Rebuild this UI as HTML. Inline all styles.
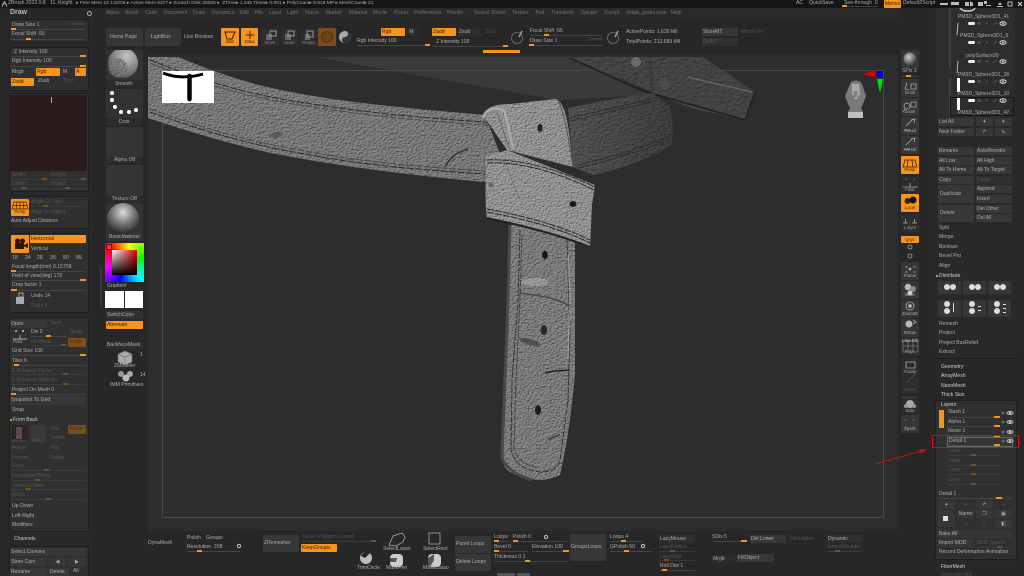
<!DOCTYPE html>
<html><head><meta charset="utf-8"><title>ZBrush</title>
<style>
html,body{margin:0;padding:0;background:#272727;}
#r{position:relative;width:1024px;height:576px;overflow:hidden;background:#272727;font-family:"Liberation Sans",sans-serif;filter:blur(.35px);}
#r i,#r b,#r em,#r u,#r p,#r svg.a{position:absolute;display:block;margin:0;}
i{font-style:normal;white-space:nowrap;font-size:5.1px;line-height:7px;color:#adadad;}
i.d{color:#565656;}
i.w{font-weight:bold;color:#d0d0d0;}
i.m{color:#737373;}
b{background:#f7941d;height:2px;width:5px;}
em{background:#444;height:1px;}
u{text-decoration:none;background:#373737;height:8px;line-height:8px;font-size:5.1px;color:#adadad;padding-left:1px;box-sizing:border-box;white-space:nowrap;border-radius:1px;}
u.o{background:#f7941d;color:#402000;}
u.x{background:#7a4d1e;color:#3a2a18;}
u.n{color:#565656;background:#303030;}
u.c{text-align:center;padding:0;}
p{background:#303030;border:1px solid #1e1e1e;border-radius:3px;box-sizing:border-box;}
</style></head><body><div id="r">

<!-- bars -->
<em style="left:0;top:0;width:1024px;height:8px;background:#151515"></em>
<em style="left:104px;top:8px;width:795px;height:10px;background:#2a2a2a"></em>
<em style="left:148px;top:54px;width:750px;height:477px;background:#2d2d2d"></em>
<em style="left:0;top:18px;width:92px;height:558px;background:#292929"></em>
<em style="left:935px;top:8px;width:82px;height:568px;background:#292929"></em>

<!-- Title bar -->
<svg class="a" style="left:1px;top:0" width="7" height="8"><path d="M3.5 1L1 7M3.5 1L6 7M1 4H6" stroke="#bbb" stroke-width=".8" fill="none"/></svg>
<i style="left:8px;top:0">ZBrush 2022.0.8</i>
<i style="left:50px;top:0">11. Knight</i>
<i style="left:76px;top:0;font-size:4.9px">▸ Free Mem 22.132GB ▸ Active Mem 6377 ▸ Scratch Disk 30026 ▸&nbsp; ZTime▸ 1.245 Timer▸ 0.001 ▸ PolyCount▸ 8.516 MP ▸ MeshCount▸ 21</i>
<i style="left:796px;top:0">AC</i><i style="left:809px;top:0">QuickSave</i>
<i style="left:844px;top:0">See-through&nbsp; 0</i>
<em style="left:842px;top:6px;width:36px;background:#444"></em><b style="left:842px;top:5px"></b>
<u class="o" style="left:884px;top:0;width:17px;text-align:center;padding:0">Menus</u>
<i style="left:903px;top:0">DefaultZScript</i>
<svg class="a" style="left:938px;top:0" width="86" height="8" fill="#bbb"><rect x="2" y="3" width="8" height="2"/><rect x="13" y="2" width="8" height="3"/><path d="M27 2h4v4h-4zM32 1l3 2v3h-3zM40 2h5v4h-5zM46 1h3v3h-3z"/><rect x="48" y="5" width="5" height="1" /><path d="M58 2l2 3h-4z" transform="translate(4 0)"/><rect x="59" y="6" width="6" height="1"/><rect x="70" y="2" width="4" height="4" fill="none" stroke="#bbb"/><path d="M80 2l4 4M84 2l-4 4" stroke="#ddd" stroke-width="1"/></svg>

<!-- Draw + menu -->
<i class="w" style="left:10px;top:9px;font-size:7px;color:#bbb">Draw</i>
<svg class="a" style="left:86px;top:10px" width="7" height="7"><circle cx="3.5" cy="3.5" r="2" stroke="#aaa" fill="none"/></svg>
<i class="m" style="left:106px;top:10px">Alpha</i><i class="m" style="left:125px;top:10px">Brush</i><i class="m" style="left:145px;top:10px">Color</i><i class="m" style="left:164px;top:10px">Document</i><i class="m" style="left:193px;top:10px">Draw</i><i class="m" style="left:212px;top:10px">Dynamics</i><i class="m" style="left:240px;top:10px">Edit</i><i class="m" style="left:255px;top:10px">File</i><i class="m" style="left:269px;top:10px">Layer</i><i class="m" style="left:287px;top:10px">Light</i><i class="m" style="left:305px;top:10px">Macro</i><i class="m" style="left:326px;top:10px">Marker</i><i class="m" style="left:349px;top:10px">Material</i><i class="m" style="left:373px;top:10px">Movie</i><i class="m" style="left:394px;top:10px">Picker</i><i class="m" style="left:414px;top:10px">Preferences</i><i class="m" style="left:447px;top:10px">Render</i><i class="m" style="left:474px;top:10px">Stencil</i><i class="m" style="left:491px;top:10px">Stroke</i><i class="m" style="left:512px;top:10px">Texture</i><i class="m" style="left:535px;top:10px">Tool</i><i class="m" style="left:551px;top:10px">Transform</i><i class="m" style="left:581px;top:10px">Zplugin</i><i class="m" style="left:604px;top:10px">Zscript</i><i class="m" style="left:626px;top:10px">m4gik_podrezane</i><i class="m" style="left:671px;top:10px">Help</i>

<!-- Top strip -->
<u style="left:106px;top:28px;width:37px;height:18px;line-height:18px;padding-left:4px;background:#363636">Home Page</u>
<u style="left:145px;top:28px;width:36px;height:18px;line-height:18px;padding-left:6px;background:#363636">LightBox</u>
<i style="left:184px;top:34px">Live Boolean</i>
<u class="o c" style="left:221px;top:28px;width:18px;height:18px;line-height:28px;font-size:4.2px">Edit</u>
<u class="o c" style="left:241px;top:28px;width:17px;height:18px;line-height:28px;font-size:4.2px">Draw</u>
<svg class="a" style="left:221px;top:28px" width="38" height="14" fill="none" stroke="#402000"><path d="M4 4h10l-3 7H6z"/><path d="M29 3v8M25 7h8" stroke-width="1"/></svg>
<u class="c" style="left:261px;top:28px;width:18px;height:18px;background:#2d2d2d;line-height:30px;font-size:4.2px;color:#888">Move</u>
<u class="c" style="left:281px;top:28px;width:17px;height:18px;background:#2d2d2d;line-height:30px;font-size:4.2px;color:#888">Scale</u>
<u class="c" style="left:300px;top:28px;width:17px;height:18px;background:#2d2d2d;line-height:30px;font-size:4.2px;color:#888">Rotate</u>
<svg class="a" style="left:261px;top:28px" width="58" height="14"><g fill="#aaa"><rect x="5" y="6" width="6" height="6" fill="#666"/><rect x="9" y="3" width="6" height="5" fill="none" stroke="#999"/><rect x="24" y="6" width="6" height="6" fill="#666"/><rect x="27" y="3" width="6" height="5" fill="none" stroke="#999"/><rect x="44" y="6" width="5" height="6" fill="#666"/><rect x="46" y="3" width="6" height="6" fill="none" stroke="#999"/></g></svg>
<u class="x" style="left:318px;top:28px;width:18px;height:18px"></u>
<svg class="a" style="left:318px;top:28px" width="36" height="18"><circle cx="9" cy="9" r="5.5" fill="#6e4419" stroke="#54330f"/><circle cx="27" cy="9" r="6" fill="#aaa"/><path d="M27 3a3 3 0 0 1 0 6a3 3 0 0 0 0 6a6 6 0 0 0 0-12" fill="#333"/></svg>
<u class="o" style="left:381px;top:28px;width:24px">Rgb</u><u style="left:407px;top:28px;width:11px;background:#2d2d2d">&nbsp;M</u>
<i style="left:357px;top:38px">Rgb Intensity 100</i><em style="left:357px;top:45px;width:73px"></em><b style="left:425px;top:44px"></b>
<u class="o" style="left:432px;top:28px;width:24px">Zadd</u><u style="left:458px;top:28px;width:24px;background:#2d2d2d">Zsub</u><i class="d" style="left:485px;top:29px">Zcut</i>
<i style="left:436px;top:39px">Z Intensity 100</i><em style="left:432px;top:46px;width:76px"></em><b style="left:503px;top:45px"></b>
<svg class="a" style="left:510px;top:30px" width="110" height="18" fill="none" stroke="#666"><circle cx="7" cy="8" r="5.5"/><circle cx="103" cy="8" r="5.5"/><path d="M9 7l3-6M105 7l3-6" stroke="#bbb" stroke-width="1.2"/></svg>
<i style="left:530px;top:28px">Focal Shift -55</i><em style="left:530px;top:35px;width:72px"></em><b style="left:544px;top:34px"></b>
<i style="left:530px;top:38px">Draw Size 1</i><i class="d" style="left:588px;top:36px;font-size:3.8px">Dynamic</i><em style="left:529px;top:45px;width:74px"></em><b style="left:529px;top:44px"></b>
<i style="left:626px;top:29px">ActivePoints: 1.630 Mil</i><i style="left:626px;top:39px">TotalPoints: 213.689 Mil</i>
<u style="left:702px;top:28px;width:36px">StoreMT</u><i class="d" style="left:741px;top:29px">Morph UV</i><u class="n" style="left:702px;top:38px;width:36px">DelMT</u>
<em style="left:483px;top:50px;width:37px;height:3px;background:#f7941d"></em>

<!-- Left panels -->
<p style="left:9px;top:19px;width:80px;height:24px"></p>
<i style="left:12px;top:22px">Draw Size 1</i><i class="d" style="left:71px;top:21px;font-size:3.8px">Dynamic</i><em style="left:11px;top:29px;width:74px"></em><b style="left:11px;top:28px"></b>
<i style="left:12px;top:31px">Focal Shift -55</i><em style="left:11px;top:39px;width:74px"></em><b style="left:26px;top:38px"></b>
<p style="left:9px;top:47px;width:80px;height:44px"></p>
<i style="left:14px;top:49px">Z Intensity 100</i><em style="left:11px;top:56px;width:75px"></em><b style="left:80px;top:55px;width:6px"></b>
<i style="left:12px;top:58px">Rgb Intensity 100</i><em style="left:11px;top:66px;width:75px"></em><b style="left:80px;top:65px;width:6px"></b>
<i style="left:12px;top:69px">Mrgb</i><u class="o" style="left:36px;top:68px;width:24px">Rgb</u><i style="left:63px;top:69px">M</i><u class="o" style="left:75px;top:68px;width:11px">A</u>
<u class="o" style="left:11px;top:78px;width:23px">Zadd</u><i style="left:38px;top:78px">Zsub</i><i class="d" style="left:63px;top:78px">Zcut</i>
<p style="left:9px;top:93px;width:80px;height:99px"></p>
<em style="left:10px;top:95px;width:77px;height:76px;background:#2a1c1c"></em>
<em style="left:51px;top:97px;width:1px;height:6px;background:#aaa"></em>
<i class="d" style="left:12px;top:172px">Width</i><i class="d" style="left:51px;top:172px">Height</i><em style="left:12px;top:179px;width:35px;background:#3b3b3b"></em><em style="left:51px;top:179px;width:35px;background:#3b3b3b"></em><b style="left:42px;top:178px;background:#7a4d1e"></b><b style="left:81px;top:178px;background:#7a4d1e"></b>
<i class="d" style="left:12px;top:181px">Depth</i><i class="d" style="left:51px;top:181px">Imbed</i><em style="left:12px;top:188px;width:35px;background:#3b3b3b"></em><em style="left:51px;top:188px;width:35px;background:#3b3b3b"></em><b style="left:21px;top:187px;background:#7a4d1e"></b><b style="left:65px;top:187px;background:#7a4d1e"></b>
<p style="left:9px;top:196px;width:80px;height:33px"></p>
<u class="o c" style="left:11px;top:199px;width:18px;height:17px;line-height:26px;font-size:4.2px">Persp</u>
<svg class="a" style="left:11px;top:199px" width="18" height="12" fill="none" stroke="#402000" stroke-width=".7"><path d="M3 3h12l2 7H1zM6 3l-1 7M9 3v7M12 3l1 7M2 6.500h14"/></svg>
<i class="d" style="left:31px;top:199px">Angle Of View</i><em style="left:31px;top:206px;width:53px;background:#3b3b3b"></em><b style="left:43px;top:205px;background:#7a4d1e"></b>
<i class="d" style="left:31px;top:209px">Align To Object</i>
<u style="left:10px;top:217px;width:76px;height:9px;line-height:9px;background:#2e2e2e">Auto Adjust Distance</u>
<p style="left:9px;top:233px;width:80px;height:80px"></p>
<u class="o" style="left:11px;top:235px;width:18px;height:18px"></u>
<svg class="a" style="left:11px;top:235px" width="18" height="18" fill="#2a1500"><circle cx="6.500" cy="6" r="2.500"/><circle cx="11.500" cy="6" r="2.500"/><rect x="4" y="8" width="9" height="6"/><path d="M13 10l4-2v5l-4-1.500z"/></svg>
<u class="o" style="left:30px;top:235px;width:56px">Horizontal</u>
<u style="left:30px;top:245px;width:56px;background:#2e2e2e">Vertical</u>
<i style="left:12px;top:255px">18</i><i style="left:25px;top:255px">24</i><i style="left:37px;top:255px">28</i><i style="left:50px;top:255px">35</i><i style="left:63px;top:255px">50</i><i style="left:76px;top:255px">85</i>
<i style="left:12px;top:264px">Focal length(mm) 0.15708</i><em style="left:11px;top:271px;width:75px"></em><b style="left:11px;top:270px"></b>
<i style="left:12px;top:273px">Field of view(deg) 179</i><em style="left:11px;top:280px;width:75px"></em><b style="left:80px;top:279px;width:6px"></b>
<i style="left:12px;top:282px">Crop factor 1</i><em style="left:11px;top:290px;width:75px"></em><b style="left:11px;top:289px;width:6px"></b>
<svg class="a" style="left:12px;top:292px" width="16" height="16" fill="#aaa"><rect x="4" y="5" width="8" height="7"/><rect x="7" y="1" width="4" height="4" fill="none" stroke="#aaa"/></svg>
<u style="left:30px;top:292px;width:56px;background:#2e2e2e">Undo 14</u><u class="n" style="left:30px;top:302px;width:56px;background:#2e2e2e">Redo 0</u>

<p style="left:9px;top:317px;width:80px;height:215px"></p>
<u style="left:10px;top:320px;width:37px">Open</u><i class="d" style="left:50px;top:320px">Save</i>
<svg class="a" style="left:12px;top:328px" width="16" height="16" fill="none" stroke="#aaa"><path d="M1 11h14"/><path d="M8 7v4"/><circle cx="4" cy="3" r=".6"/><circle cx="11" cy="3" r=".6"/></svg>
<i style="left:13px;top:338px;font-size:4.2px">Floor</i>
<i style="left:31px;top:329px">Div 0</i><em style="left:31px;top:336px;width:35px"></em><b style="left:46px;top:335px"></b><i class="d" style="left:70px;top:329px">Snap</i>
<i class="d" style="left:31px;top:339px">Fill Mode</i><em style="left:31px;top:345px;width:35px;background:#3b3b3b"></em><b style="left:61px;top:344px;background:#7a4d1e"></b>
<u class="x" style="left:68px;top:338px;width:18px;height:9px;line-height:9px;padding-left:2px">From</u>
<i style="left:12px;top:348px">Grid Size 100</i><em style="left:11px;top:355px;width:75px"></em><b style="left:80px;top:354px;width:6px"></b>
<i style="left:12px;top:358px">Tiles 6</i><em style="left:11px;top:365px;width:75px"></em><b style="left:14px;top:364px"></b>
<i class="d" style="left:12px;top:368px">E Enhance Factor</i><em style="left:11px;top:374px;width:75px;background:#3b3b3b"></em><b style="left:63px;top:373px;background:#7a4d1e"></b>
<i class="d" style="left:12px;top:377px">E Enhance Opacity</i><em style="left:11px;top:384px;width:75px;background:#3b3b3b"></em><b style="left:63px;top:383px;background:#7a4d1e"></b>
<i style="left:12px;top:387px">Project On Mesh 0</i><em style="left:11px;top:394px;width:75px"></em><b style="left:11px;top:393px"></b>
<u style="left:10px;top:396px;width:76px;height:9px;line-height:9px">Snapshot To Grid</u>
<i style="left:12px;top:407px">Snap</i>
<em style="left:10px;top:419px;width:2px;height:2px;background:#f7941d"></em><i class="w" style="left:13px;top:417px;font-weight:normal">From Back</i>
<em style="left:12px;top:425px;width:16px;height:15px;background:#2a2424"></em><em style="left:16px;top:427px;width:6px;height:12px;background:#5a4a48"></em>
<em style="left:31px;top:425px;width:15px;height:15px;background:#393939"></em>
<i class="d" style="left:12px;top:437px;font-size:4.6px">ZMap1</i><i class="d" style="left:31px;top:437px;font-size:4.6px">ZMap1</i>
<i class="d" style="left:50px;top:426px">One</i><u class="x" style="left:68px;top:425px;width:18px;height:9px;line-height:9px;padding-left:2px">FLine</u>
<i class="d" style="left:50px;top:435px">Switch</i>
<u class="n" style="left:10px;top:444px;width:37px;padding-left:2px">Adjust</u><u class="n" style="left:49px;top:444px;width:37px">Flip</u>
<u class="n" style="left:10px;top:454px;width:37px;padding-left:2px">Inverse</u><u class="n" style="left:49px;top:454px;width:37px">Rotate</u>
<i class="d" style="left:12px;top:463px">Scale</i><em style="left:11px;top:470px;width:75px;background:#3b3b3b"></em><b style="left:44px;top:469px;background:#7a4d1e"></b>
<i class="d" style="left:12px;top:473px">Horizontal Offset</i><em style="left:11px;top:480px;width:75px;background:#3b3b3b"></em><b style="left:35px;top:479px;background:#7a4d1e"></b>
<i class="d" style="left:12px;top:483px">Vertical Offset</i><em style="left:11px;top:489px;width:75px;background:#3b3b3b"></em><b style="left:26px;top:488px;background:#7a4d1e"></b>
<i class="d" style="left:12px;top:492px">Angle</i><em style="left:11px;top:499px;width:75px;background:#3b3b3b"></em><b style="left:46px;top:498px;background:#7a4d1e"></b>
<i style="left:12px;top:503px">Up-Down</i><i style="left:12px;top:513px">Left-Right</i><i style="left:12px;top:522px">Modifiers</i>
<i class="w" style="left:14px;top:536px;font-weight:normal">Channels</i>
<p style="left:9px;top:546px;width:80px;height:32px"></p>
<u style="left:10px;top:548px;width:76px">Select Camera</u>
<u style="left:10px;top:558px;width:37px">Store Cam</u><u class="c" style="left:49px;top:558px;width:17px">◀</u><u class="c" style="left:68px;top:558px;width:18px">▶</u>
<u style="left:10px;top:568px;width:37px">Rename</u><u style="left:49px;top:568px;width:20px">Delete</u><i style="left:73px;top:568px">All</i>

<!-- Tool column -->
<em style="left:100px;top:267px;width:2px;height:40px;background:#3a3a3a"></em>
<em style="left:106px;top:50px;width:37px;height:37px;background:#323232"></em>
<em style="left:106px;top:89px;width:37px;height:36px;background:#323232"></em>
<em style="left:106px;top:127px;width:37px;height:36px;background:#343434"></em>
<em style="left:106px;top:165px;width:37px;height:37px;background:#343434"></em>
<em style="left:106px;top:203px;width:37px;height:38px;background:#323232"></em>
<em style="left:106px;top:80px;width:37px;height:7px;background:#2c2c2c"></em>
<em style="left:106px;top:118px;width:37px;height:7px;background:#2c2c2c"></em>
<em style="left:106px;top:157px;width:37px;height:6px;background:#2c2c2c"></em>
<em style="left:106px;top:196px;width:37px;height:6px;background:#2c2c2c"></em>
<svg class="a" style="left:106px;top:50px" width="38" height="190">
<defs>
<filter id="lp" x="0" y="0" width="100%" height="100%" color-interpolation-filters="sRGB"><feTurbulence type="fractalNoise" baseFrequency=".5" numOctaves="3" seed="3"/><feDiffuseLighting surfaceScale="1" lighting-color="#8c8c8c"><feDistantLight azimuth="225" elevation="60"/></feDiffuseLighting><feComposite in2="SourceAlpha" operator="in"/></filter>
<radialGradient id="sg" cx=".62" cy=".28" r=".8"><stop offset="0" stop-color="#c4c4c4"/><stop offset=".6" stop-color="#808080"/><stop offset="1" stop-color="#484848"/></radialGradient>
<radialGradient id="mg" cx=".5" cy=".3" r=".7"><stop offset="0" stop-color="#ddd"/><stop offset=".5" stop-color="#777"/><stop offset="1" stop-color="#222"/></radialGradient>
</defs>
<circle cx="17" cy="13" r="15" fill="url(#sg)"/><circle cx="12" cy="18" r="9.500" filter="url(#lp)" opacity=".7"/>
<g fill="#fff"><circle cx="6" cy="43" r="2"/><circle cx="6" cy="50" r="2"/><circle cx="9" cy="57" r="2"/><circle cx="15" cy="62" r="2"/><circle cx="23" cy="62" r="2"/><circle cx="30" cy="60" r="2"/></g>
<rect x="2" y="154" width="32" height="29" fill="#333"/><circle cx="17" cy="169" r="16" fill="url(#mg)"/>
</svg>
<i style="left:115px;top:81px">Smooth</i><i style="left:119px;top:119px">Dots</i><i style="left:114px;top:157px">Alpha Off</i><i style="left:112px;top:196px">Texture Off</i><i style="left:109px;top:234px">BasicMaterial</i>
<em style="left:105px;top:243px;width:39px;height:39px;background:conic-gradient(from 315deg,#f00,#ff0,#0f0,#0ff,#00f,#f0f,#f00)"></em>
<em style="left:112px;top:250px;width:25px;height:25px;background:linear-gradient(to bottom,rgba(0,0,0,0),#000),linear-gradient(to right,#fff,#d00)"></em>
<em style="left:106px;top:244px;width:4px;height:4px;background:#f33;border:1px solid #800"></em>
<i style="left:107px;top:283px">Gradient</i>
<em style="left:105px;top:291px;width:19px;height:17px;background:#fff"></em><em style="left:125px;top:291px;width:18px;height:17px;background:#fff"></em>
<u style="left:106px;top:311px;width:37px;background:#323232">SwitchColor</u>
<u class="o" style="left:106px;top:321px;width:37px">Alternate</u>
<u style="left:106px;top:341px;width:37px;background:#2d2d2d">BackfaceMask</u>
<svg class="a" style="left:112px;top:350px" width="28" height="32"><path d="M6 4l7-3 7 3v8l-7 3-7-3z" fill="#aaa" stroke="#666" stroke-width=".6"/><path d="M6 4l7 3 7-3M13 7v8" stroke="#666" fill="none" stroke-width=".6"/><circle cx="9" cy="24" r="3" fill="#999"/><circle cx="18" cy="24" r="3" fill="#aaa"/><circle cx="14" cy="28" r="3.500" fill="#bbb"/></svg>
<i style="left:114px;top:363px">ZModeler</i><i style="left:140px;top:352px">1</i><i style="left:110px;top:382px">IMM Primitives</i><i style="left:140px;top:372px">14</i>

<!-- Canvas image -->
<svg class="a" style="left:148px;top:54px" width="750" height="477" viewBox="148 54 750 477">
<defs>
<filter id="la" x="0" y="0" width="100%" height="100%" color-interpolation-filters="sRGB"><feTurbulence type="fractalNoise" baseFrequency=".4 .5" numOctaves="3" seed="5"/><feDiffuseLighting surfaceScale="1" lighting-color="#8c8c8c"><feDistantLight azimuth="235" elevation="62"/></feDiffuseLighting><feComposite in2="SourceAlpha" operator="in"/></filter>
<filter id="lb" x="0" y="0" width="100%" height="100%" color-interpolation-filters="sRGB"><feTurbulence type="fractalNoise" baseFrequency=".5 .6" numOctaves="3" seed="8"/><feDiffuseLighting surfaceScale=".9" lighting-color="#aaaaaa"><feDistantLight azimuth="235" elevation="62"/></feDiffuseLighting><feComposite in2="SourceAlpha" operator="in"/></filter>
<filter id="lc" x="0" y="0" width="100%" height="100%" color-interpolation-filters="sRGB"><feTurbulence type="fractalNoise" baseFrequency=".3 .4" numOctaves="2" seed="11"/><feDiffuseLighting surfaceScale=".8" lighting-color="#5c5c5c"><feDistantLight azimuth="235" elevation="62"/></feDiffuseLighting><feComposite in2="SourceAlpha" operator="in"/></filter>
<filter id="ld" x="0" y="0" width="100%" height="100%" color-interpolation-filters="sRGB"><feTurbulence type="fractalNoise" baseFrequency=".45 .55" numOctaves="3" seed="14"/><feDiffuseLighting surfaceScale="1" lighting-color="#909090"><feDistantLight azimuth="235" elevation="62"/></feDiffuseLighting><feComposite in2="SourceAlpha" operator="in"/></filter>
<filter id="le" x="0" y="0" width="100%" height="100%" color-interpolation-filters="sRGB"><feTurbulence type="fractalNoise" baseFrequency=".25 .35" numOctaves="2" seed="17"/><feDiffuseLighting surfaceScale=".7" lighting-color="#4c4c4c"><feDistantLight azimuth="235" elevation="62"/></feDiffuseLighting><feComposite in2="SourceAlpha" operator="in"/></filter>
<linearGradient id="rs" x1="0" x2="1" y1="0" y2="0"><stop offset="0" stop-color="#000" stop-opacity="0"/><stop offset="1" stop-color="#000" stop-opacity=".25"/></linearGradient>
</defs>
<polygon points="315,57 580,57 650,95 558,100" fill="#3a3a3a"/>
<path d="M148 70.500H883.500V517M162.500 70.500V517.500H883.500" stroke="#4a4a4a" fill="none"/>

<!-- Main belt -->
<path d="M148 57L178 57C200 66 240 82 281 90C330 100 380 106 485 115L510 180L485 182C420 176 350 168 281 155C240 147 190 132 148 118Z" filter="url(#la)"/>
<g fill="none" stroke="#2b2b2b" stroke-width="1">
<path d="M150 60C200 80 250 95 300 102C360 112 420 118 500 123" stroke-dasharray="7 1.500"/>
<path d="M150 63C200 83 250 98 300 105C360 115 420 121 500 126" stroke-dasharray="7 1.500" stroke="#4a4a4a"/>
<path d="M150 112C200 130 250 145 300 153C360 165 420 170 500 175" stroke-dasharray="7 1.500"/>
<path d="M150 109C200 127 250 142 300 150C360 162 420 167 500 172" stroke-dasharray="7 1.500" stroke="#4a4a4a"/>
</g>
<path d="M268 135l10-4 6 3-8 5z" fill="#444" opacity=".6"/>
<path d="M445 167C450 158 455 153 468 149" stroke="#333" fill="none" stroke-width="1.500"/>

<!-- Top strap -->
<polygon points="570,57 703,57 755,92 745,120 690,108 647,90" filter="url(#le)"/>
<path d="M570 58L640 90L745 120L755 92" stroke="#1f1f1f" fill="none" stroke-width="1.500"/>
<path d="M688 77L752 92" stroke="#999" fill="none" stroke-width="1" opacity=".5"/>
<circle cx="636" cy="62" r="5" fill="#6a6a6a"/><circle cx="665" cy="85" r="5" fill="#4c4c4c"/>
<path d="M650 57L652 88" stroke="#333"/>

<!-- Right strap -->
<path d="M568 108C600 102 630 95 653 93L670 107C673 120 673 132 672 143C660 155 620 170 593 175L573 167Z" filter="url(#lc)"/>
<path d="M568 108C600 102 630 95 653 93L670 107C673 120 673 132 672 143C660 155 620 170 593 175L573 167Z" fill="url(#rs)"/>
<path d="M570 118L655 98M570 121L655 101M578 165C620 155 650 145 672 135M578 168C620 158 650 148 672 138" stroke="#2b2b2b" fill="none" stroke-dasharray="6 1"/>

<!-- Buckle fold -->
<path d="M483 115C487 107 495 104 510 104C530 102 545 100 557 99C564 105 567 115 570 140L573 167L507 150Z" filter="url(#lb)"/>
<path d="M483 118C486 108 496 106 505 112L513 148" stroke="#aaa" stroke-width="2.500" fill="none"/>
<path d="M497 112L509 148" stroke="#666" stroke-width="1" fill="none"/>
<ellipse cx="540" cy="128" rx="2.500" ry="4" fill="#222"/>
<path d="M557 99C564 110 567 130 573 167" stroke="#555" fill="none"/>

<!-- Vertical strap -->
<path d="M510 225L575 225L575 373C572 410 566 450 560 475C545 482 530 482 510 472C504 468 501 460 502 455L507 330Z" filter="url(#ld)"/>
<path d="M510 225L507 330L502 455C502 465 515 475 532 480" fill="none" stroke="#4a4a4a" stroke-width="3"/>
<path d="M520 230L518 300L512 380L511 450C515 465 525 470 540 472C552 472 558 468 560 460L568 400L570 330L567 240" fill="none" stroke="#333" stroke-dasharray="6 1.500" stroke-width="1"/>
<path d="M522 235L520 300L516 380L514 448C518 462 528 466 540 468" fill="none" stroke="#444" stroke-dasharray="6 1.500"/>
<path d="M568 255L570 300L568 360" stroke="#ccc" stroke-width="1.500" fill="none" opacity=".4"/>
<ellipse cx="545" cy="255" rx="2.800" ry="4" fill="#151515"/>
<ellipse cx="544" cy="330" rx="3.200" ry="5" fill="#2a2a2a"/>
<ellipse cx="538" cy="410" rx="3" ry="5" fill="#1a1a1a"/>
<ellipse cx="530" cy="342" rx="11" ry="3" fill="#333" opacity=".6" transform="rotate(15 530 342)"/>
<path d="M545 373C555 370 562 371 570 370" stroke="#222" stroke-width="1.500" fill="none"/>
<ellipse cx="535" cy="282" rx="14" ry="4" fill="#ddd" opacity=".3"/>
<path d="M520 293C535 296 550 295 570 306" stroke="#333" stroke-width="1.500" fill="none" opacity=".7"/>
<path d="M548 440C553 437 556 436 560 435" stroke="#333" stroke-width="2" fill="none" opacity=".7"/>

<!-- Lower band -->
<path d="M485 157L507 150L595 185L592 205L590 247C560 235 520 225 487 218C484 200 487 175 485 157Z" filter="url(#lb)"/>
<path d="M486 160C520 158 560 170 595 187M487 163C520 161 560 173 594 190M487 209C520 215 560 225 590 240M487 212C520 218 560 228 590 243" stroke="#2a2a2a" fill="none" stroke-dasharray="7 1"/>
<path d="M505 162L520 200" stroke="#666" opacity=".6"/>
<ellipse cx="573" cy="204" rx="3.500" ry="3" fill="#1c1c1c"/>
<circle cx="491" cy="185" r="2.500" fill="#666"/>
<path d="M487 218C520 225 560 235 590 247" stroke="#222" stroke-width="2" fill="none"/>

<!-- Head -->
<path d="M851 82C854 80 860 80 862 84L866 96L863 104L861 108L863 112V118H848V112L850 108L848 104L845 96Z" fill="#7a7a7a"/>
<path d="M852 84h7l1 10-4 6-4-6z" fill="#aaa"/><rect x="853.500" y="91" width="4" height="6" fill="#555" opacity=".5"/><path d="M848 112H863V118H848Z" fill="#c0c0c0"/>
<polygon points="862,74 875,71 875,77" fill="#e80000"/><rect x="877" y="71" width="6" height="6" fill="#0000e0"/><polygon points="877,79 883,79 880,93" fill="#00e000"/>

<!-- Thumbnail -->
<rect x="162" y="71" width="52" height="32" fill="#fff"/>
<path d="M163 73C175 78 190 78 203 74" stroke="#000" stroke-width="3" fill="none"/><path d="M189.500 76V99" stroke="#000" stroke-width="4.500" stroke-linecap="round"/>
</svg>

<!-- Right icon column -->
<u style="left:901px;top:50px;width:18px;height:18px;background:#363636"></u>
<svg class="a" style="left:901px;top:50px" width="18" height="18"><defs><radialGradient id="ss" cx=".4" cy=".35" r=".7"><stop offset="0" stop-color="#ccc"/><stop offset="1" stop-color="#333"/></radialGradient></defs><circle cx="9" cy="9" r="6.500" fill="url(#ss)"/></svg>
<i style="left:902px;top:68px">SPix 3</i><em style="left:901px;top:76px;width:18px"></em><b style="left:906px;top:75px"></b>
<u class="c" style="left:901px;top:79px;width:18px;height:18px;line-height:28px;font-size:4.2px;background:#363636">Scroll</u>
<u class="c" style="left:901px;top:98px;width:18px;height:18px;line-height:28px;font-size:4.2px;background:#363636">Zoom</u>
<u class="c" style="left:901px;top:117px;width:18px;height:18px;line-height:28px;font-size:4.2px;background:#363636">Actual</u>
<u class="c" style="left:901px;top:136px;width:18px;height:18px;line-height:28px;font-size:4.2px;background:#363636">AAHalf</u>
<u class="o c" style="left:901px;top:156px;width:18px;height:18px;line-height:28px;font-size:4.2px">Persp</u>
<u class="c" style="left:901px;top:176px;width:18px;height:18px;line-height:28px;font-size:4.2px;background:#2d2d2d">Floor</u>
<u class="o c" style="left:901px;top:194px;width:18px;height:18px;line-height:28px;font-size:4.2px">Local</u>
<u class="c" style="left:901px;top:214px;width:18px;height:18px;line-height:28px;font-size:4.2px;background:#2d2d2d">L.Sym</u>
<u class="o c" style="left:901px;top:236px;width:18px;height:7px;line-height:7px;font-size:4.2px">Qxyz</u>
<u class="c" style="left:901px;top:262px;width:18px;height:18px;line-height:28px;font-size:4.2px;background:#363636">Frame</u>
<u class="c" style="left:901px;top:281px;width:18px;height:18px;line-height:28px;font-size:4.2px;background:#363636">Move</u>
<u class="c" style="left:901px;top:300px;width:18px;height:18px;line-height:28px;font-size:4.2px;background:#363636">Zoom3D</u>
<u class="c" style="left:901px;top:319px;width:18px;height:18px;line-height:28px;font-size:4.2px;background:#363636">Rotate</u>
<u class="c" style="left:901px;top:338px;width:18px;height:18px;line-height:28px;font-size:4.2px;background:#2d2d2d">PolyF</u>
<u class="c" style="left:901px;top:358px;width:18px;height:18px;line-height:28px;font-size:4.2px;background:#2d2d2d">Transp</u>
<u class="c n" style="left:901px;top:377px;width:18px;height:16px;line-height:26px;font-size:4.2px;background:#2d2d2d">Ghost</u>
<i class="d" style="left:902px;top:394px;font-size:4.2px">Dynamic</i>
<u class="c" style="left:901px;top:400px;width:18px;height:14px;line-height:22px;font-size:4.2px;background:#2d2d2d">Solo</u>
<u class="c" style="left:901px;top:415px;width:18px;height:18px;line-height:28px;font-size:4.2px;background:#363636">Xpose</u>
<svg class="a" style="left:901px;top:50px" width="20" height="390" fill="none" stroke="#aaa" stroke-width=".8">
<path d="M6 33l-2 6 4 1M10 34h5v5h-5z"/><circle cx="6" cy="56" r="3"/><path d="M4 59l-2 3M10 52h5v5h-5z"/><path d="M5 76l7-7M10 70l4-1-1 4M3 80h6"/><path d="M5 95l7-7M10 89l4-1-1 4M3 99h6"/>
<path d="M4 110h10l2 7H2zM7 110l-1 7M11 110l1 7" stroke="#402000"/>
<path d="M2 137h15M9 133v4M5 129h1M13 129h1"/>
<circle cx="6.500" cy="151" r="3" fill="#402000" stroke="none"/><circle cx="12" cy="150" r="3.500" fill="#111" stroke="none"/>
<path d="M2 173h5M11 173h5M4.500 169v4M13.500 169v4"/>
<circle cx="9" cy="197" r="2"/><circle cx="9" cy="206" r="2"/>
<path d="M4 217h3M12 217h3M4 222h3M12 222h3"/><circle cx="9" cy="219" r="1" fill="#bbb"/>
<circle cx="7" cy="237" r="3" fill="#bbb"/><circle cx="12" cy="239" r="3" fill="#888" stroke="none"/><circle cx="9" cy="243" r="2.500" fill="#ccc" stroke="none"/>
<circle cx="9" cy="256" r="4"/><circle cx="9" cy="256" r="1.500" fill="#bbb"/>
<circle cx="8" cy="274" r="3.500" fill="#bbb" stroke="none"/><path d="M12 270l3 2-3 2"/>
<rect x="2" y="291" width="15" height="11" stroke="#777"/><path d="M7 291v11M12 291v11M2 296h15" stroke="#777"/>
<path d="M5 312h9v6H5z"/><path d="M5 333l9-9" stroke="#555"/>
<circle cx="9" cy="354" r="4" fill="#aaa" stroke="none"/><circle cx="5" cy="356" r="2" fill="#999" stroke="none"/><circle cx="13" cy="356" r="2" fill="#999" stroke="none"/>
<path d="M4 370h2M12 370h2M4 377h2M12 377h2" stroke-dasharray="1 1"/>
</svg>
<i style="left:902px;top:337px;font-size:4.2px;color:#aaa;font-weight:bold">Line Fill</i>

<!-- Right panel top tree -->
<em style="left:937px;top:8px;width:77px;height:110px;background:#2d2d2d"></em>
<svg class="a" style="left:945px;top:8px" width="70" height="110" fill="none">
<path d="M5 0V60M5 70V108" stroke="#555"/><path d="M15 0C18 4 28 4 30 0" stroke="#ccc" stroke-width="1.500"/>
<path d="M13 15l-1 12M13 53l-1 12" stroke="#bbb"/>
<rect x="12" y="70" width="3" height="14" fill="#fff"/><rect x="12" y="90" width="3" height="12" fill="#fff"/>
<rect x="5.500" y="89.500" width="63" height="18" stroke="#151515"/>
</svg>
<svg class="a" style="left:965px;top:20px" width="50" height="90" fill="#bbb">
<g><rect x="3" y="2" width="7" height="3" rx="1.500" fill="#eee"/><circle cx="14" cy="3.500" r="1.500" fill="#555"/><circle cx="22" cy="3.500" r="1" fill="#555"/><path d="M28 5l4-3" stroke="#555"/><ellipse cx="38" cy="3.500" rx="3" ry="1.800" fill="none" stroke="#ddd"/><circle cx="38" cy="3.500" r="1"/></g>
<g transform="translate(0 19)"><rect x="3" y="2" width="7" height="3" rx="1.500" fill="#eee"/><circle cx="14" cy="3.500" r="1.500" fill="#555"/><circle cx="22" cy="3.500" r="1" fill="#555"/><path d="M28 5l4-3" stroke="#555"/><ellipse cx="38" cy="3.500" rx="3" ry="1.800" fill="none" stroke="#ddd"/><circle cx="38" cy="3.500" r="1"/></g>
<g transform="translate(0 38)"><rect x="3" y="2" width="7" height="3" rx="1.500" fill="#eee"/><circle cx="14" cy="3.500" r="1.500" fill="#555"/><circle cx="22" cy="3.500" r="1" fill="#555"/><path d="M28 5l4-3" stroke="#555"/><ellipse cx="38" cy="3.500" rx="3" ry="1.800" fill="none" stroke="#ddd"/><circle cx="38" cy="3.500" r="1"/></g>
<g transform="translate(0 58)"><rect x="3" y="2" width="7" height="3" rx="1.500" fill="#eee"/><circle cx="14" cy="3.500" r="1.500" fill="#555"/><circle cx="22" cy="3.500" r="1" fill="#555"/><path d="M28 5l4-3" stroke="#555"/><ellipse cx="38" cy="3.500" rx="3" ry="1.800" fill="none" stroke="#ddd"/><circle cx="38" cy="3.500" r="1"/></g>
<g transform="translate(0 77)"><rect x="3" y="2" width="7" height="3" rx="1.500" fill="#fff"/><circle cx="14" cy="3.500" r="1.500" fill="#555"/><circle cx="22" cy="3.500" r="1" fill="#555"/><path d="M28 5l4-3" stroke="#555"/><ellipse cx="38" cy="3.500" rx="3" ry="1.800" fill="none" stroke="#ddd"/><circle cx="38" cy="3.500" r="1"/></g>
</svg>
<i style="left:958px;top:14px">PM3D_Sphere3D1_41</i><i style="left:960px;top:33px">PM3D_Sphere3D1_9</i><i style="left:966px;top:53px">polySurface30</i><i style="left:958px;top:72px">PM3D_Sphere3D1_26</i><i style="left:958px;top:91px">PM3D_Sphere3D1_10</i><i style="left:958px;top:110px">PM3D_Sphere3D1_47</i>

<!-- Right panel buttons -->
<u style="left:938px;top:118px;width:36px">List All</u><u class="c" style="left:976px;top:118px;width:17px">✦</u><u class="c" style="left:995px;top:118px;width:17px">✦</u>
<u style="left:938px;top:128px;width:36px">New Folder</u><u class="c" style="left:976px;top:128px;width:17px">↱</u><u class="c" style="left:995px;top:128px;width:17px">↳</u>
<u style="left:938px;top:147px;width:36px">Rename</u><u style="left:976px;top:147px;width:36px">AutoReorder</u>
<u style="left:938px;top:157px;width:36px">All Low</u><u style="left:976px;top:157px;width:36px">All High</u>
<u style="left:938px;top:166px;width:36px">All To Home</u><u style="left:976px;top:166px;width:36px">All To Target</u>
<u style="left:938px;top:176px;width:36px">Copy</u><u class="n" style="left:976px;top:176px;width:36px">Paste</u>
<u style="left:938px;top:185px;width:36px;height:18px;line-height:18px;padding-left:2px">Duplicate</u><u style="left:976px;top:185px;width:36px">Append</u><u style="left:976px;top:195px;width:36px">Insert</u>
<u style="left:938px;top:205px;width:36px;height:17px;line-height:17px;padding-left:2px">Delete</u><u style="left:976px;top:205px;width:36px">Del Other</u><u style="left:976px;top:214px;width:36px">Del All</u>
<i style="left:939px;top:225px">Split</i><i style="left:939px;top:234px">Merge</i><i style="left:939px;top:244px">Boolean</i><i style="left:939px;top:253px">Bevel Pro</i><i style="left:939px;top:263px">Align</i>
<em style="left:936px;top:275px;width:2px;height:2px;background:#f7941d"></em><i class="w" style="left:939px;top:273px;font-weight:normal">Distribute</i>
<u style="left:938px;top:281px;width:23px;height:13px"></u><u style="left:963px;top:281px;width:23px;height:13px"></u><u style="left:988px;top:281px;width:23px;height:13px"></u>
<u style="left:938px;top:300px;width:23px;height:17px"></u><u style="left:963px;top:300px;width:23px;height:17px"></u><u style="left:988px;top:300px;width:23px;height:17px"></u>
<svg class="a" style="left:938px;top:281px" width="74" height="37" fill="#ddd"><circle cx="9" cy="6" r="3"/><circle cx="15" cy="6" r="3"/><circle cx="34" cy="6" r="3"/><circle cx="40" cy="6" r="3"/><circle cx="59" cy="6" r="3"/><circle cx="65" cy="6" r="3"/><circle cx="9" cy="23" r="3"/><circle cx="9" cy="30" r="3"/><rect x="15" y="22" width="1" height="9"/><circle cx="34" cy="23" r="3"/><circle cx="34" cy="30" r="3"/><rect x="40" y="25" width="3" height="1"/><rect x="40" y="29" width="3" height="1"/><circle cx="59" cy="23" r="3"/><circle cx="59" cy="30" r="3"/><rect x="65" y="23" width="3" height="1"/><rect x="65" y="27" width="3" height="1"/><rect x="65" y="31" width="3" height="1"/></svg>
<i style="left:939px;top:321px">Remesh</i><i style="left:939px;top:330px">Project</i><i style="left:939px;top:340px">Project BasRelief</i><i style="left:939px;top:349px">Extract</i>
<em style="left:935px;top:358px;width:82px;height:1px;background:#1e1e1e"></em>
<em style="left:935px;top:360px;width:82px;height:40px;background:#272727"></em>
<i class="w" style="left:941px;top:364px;font-weight:normal">Geometry</i><i class="w" style="left:941px;top:373px;font-weight:normal">ArrayMesh</i><i class="w" style="left:941px;top:383px;font-weight:normal">NanoMesh</i><i class="w" style="left:941px;top:392px;font-weight:normal">Thick Skin</i>
<p style="left:935px;top:400px;width:82px;height:160px"></p>
<i class="w" style="left:941px;top:402px;font-weight:normal">Layers</i>
<em style="left:939px;top:410px;width:5px;height:18px;background:#f7941d"></em>
<i style="left:948px;top:409px">Slash 1</i><em style="left:947px;top:417px;width:53px"></em><b style="left:994px;top:416px;width:6px"></b>
<i style="left:948px;top:419px">Alpha 1</i><em style="left:947px;top:426px;width:53px"></em><b style="left:994px;top:425px;width:6px"></b>
<i style="left:948px;top:428px">Noise 1</i><em style="left:947px;top:436px;width:53px"></em><b style="left:994px;top:435px;width:6px"></b>
<em style="left:947px;top:437px;width:66px;height:10px;background:#363636;border:1px solid #6a6a6a;box-sizing:border-box"></em>
<i style="left:949px;top:438px">Detail 1</i><em style="left:948px;top:445px;width:52px"></em><b style="left:994px;top:444px;width:6px"></b>
<i class="d" style="left:948px;top:448px">Layer</i><em style="left:948px;top:455px;width:52px;background:#3b3b3b"></em><b style="left:971px;top:454px;background:#7a4d1e"></b>
<i class="d" style="left:948px;top:458px">Layer</i><em style="left:948px;top:465px;width:52px;background:#3b3b3b"></em><b style="left:971px;top:464px;background:#7a4d1e"></b>
<i class="d" style="left:948px;top:467px">Layer</i><em style="left:948px;top:474px;width:52px;background:#3b3b3b"></em><b style="left:971px;top:473px;background:#7a4d1e"></b>
<i class="d" style="left:948px;top:477px">Layer</i><em style="left:948px;top:484px;width:52px;background:#3b3b3b"></em><b style="left:971px;top:483px;background:#7a4d1e"></b>
<svg class="a" style="left:1000px;top:410px" width="15" height="40" fill="none" stroke="#bbb"><g><circle cx="3" cy="3" r="1.500" fill="#666" stroke="none"/><ellipse cx="10" cy="3" rx="3" ry="1.500"/><circle cx="10" cy="3" r=".8" fill="#ccc"/></g><g transform="translate(0 9)"><circle cx="3" cy="3" r="1.500" fill="#666" stroke="none"/><ellipse cx="10" cy="3" rx="3" ry="1.500"/><circle cx="10" cy="3" r=".8" fill="#ccc"/></g><g transform="translate(0 19)"><circle cx="3" cy="3" r="1.500" fill="#666" stroke="none"/><ellipse cx="10" cy="3" rx="3" ry="1.500"/><circle cx="10" cy="3" r=".8" fill="#ccc"/></g><g transform="translate(0 28)"><circle cx="3" cy="3" r="1.500" fill="#666" stroke="none"/><ellipse cx="10" cy="3" rx="3" ry="1.500"/><circle cx="10" cy="3" r=".8" fill="#ccc"/></g></svg>
<i style="left:939px;top:491px">Detail 1</i><em style="left:938px;top:498px;width:74px"></em><b style="left:996px;top:497px;width:6px"></b>
<u class="c" style="left:938px;top:501px;width:17px">✦</u><u class="c n" style="left:957px;top:501px;width:17px">✦</u><u class="c" style="left:976px;top:501px;width:17px">↱</u><u class="c n" style="left:995px;top:501px;width:17px">↳</u>
<u style="left:938px;top:510px;width:17px;height:17px"></u><em style="left:943px;top:516px;width:5px;height:5px;background:#ddd"></em>
<u class="c" style="left:957px;top:510px;width:17px">Name</u><u class="c" style="left:976px;top:510px;width:17px">❐</u><u class="c" style="left:995px;top:510px;width:17px">▣</u>
<u class="c n" style="left:957px;top:520px;width:17px">▭</u><u class="c n" style="left:976px;top:520px;width:17px">▯</u><u class="c" style="left:995px;top:520px;width:17px">◧</u>
<u style="left:938px;top:530px;width:74px">Bake All</u>
<u style="left:938px;top:539px;width:36px">Import MDD</u><i class="d" style="left:977px;top:540px">MDD Speed</i><em style="left:977px;top:547px;width:35px;background:#3b3b3b"></em><b style="left:997px;top:546px;background:#7a4d1e"></b>
<i style="left:939px;top:549px">Record Deformation Animation</i>
<em style="left:935px;top:561px;width:82px;height:15px;background:#272727"></em>
<i class="w" style="left:941px;top:564px;font-weight:normal">FiberMesh</i><i class="d" style="left:941px;top:572px">Geometry HD</i>

<!-- Red box and arrow -->
<em style="left:932px;top:435px;width:87px;height:13px;background:transparent;border:1px solid #d01010;box-sizing:border-box"></em>
<svg class="a" style="left:870px;top:440px" width="65" height="30"><path d="M5 24L52 11" stroke="#c01414" stroke-width="1"/><path d="M57 9L49 9L51 14Z" fill="#c01414"/></svg>

<!-- Bottom controls -->
<i style="left:148px;top:540px">DynaMesh</i><i style="left:187px;top:535px">Polish</i><i style="left:206px;top:535px">Groups</i>
<i style="left:187px;top:544px">Resolution&nbsp; 208</i><em style="left:187px;top:551px;width:53px"></em><b style="left:197px;top:550px"></b>
<svg class="a" style="left:236px;top:543px" width="6" height="6"><circle cx="3" cy="3" r="1.600" fill="none" stroke="#ccc"/></svg>
<u style="left:263px;top:535px;width:36px;height:17px;line-height:17px">ZRemesher</u>
<i class="d" style="left:302px;top:534px">Target Polygons Count</i><em style="left:302px;top:541px;width:74px;background:#3b3b3b"></em><b style="left:371px;top:540px;background:#7a4d1e"></b>
<u class="o" style="left:301px;top:544px;width:36px">KeepGroups</u>
<svg class="a" style="left:350px;top:532px" width="100" height="38">
<path d="M39 13L43 4L52 1L55 5L53 10L46 14Z" fill="none" stroke="#aaa" stroke-width=".8"/>
<rect x="79" y="1" width="11" height="11" fill="none" stroke="#aaa" stroke-width=".8"/>
<circle cx="16" cy="26" r="6" fill="#bbb"/><path d="M11 24a6 6 0 0 1 9-3l-5 5z" fill="#222"/>
<rect x="40" y="22" width="13" height="13" rx="4" fill="#ccc"/><path d="M40 26h7l-1 4h-6z" fill="#555"/>
<rect x="78" y="22" width="13" height="13" rx="4" fill="#ccc"/><path d="M84 22v6l-4 7h-2v-9z" fill="#555"/>
</svg>
<i style="left:383px;top:546px">SelectLasso</i><i style="left:423px;top:546px">SelectRect</i>
<i style="left:357px;top:565px">TrimCircle</i><i style="left:386px;top:565px">MaskPen</i><i style="left:423px;top:565px">MaskLasso</i>
<u style="left:455px;top:536px;width:36px;height:17px;line-height:17px">Panel Loops</u>
<u style="left:455px;top:554px;width:36px;height:17px;line-height:17px">Delete Loops</u>
<i style="left:494px;top:534px">Loops</i><em style="left:494px;top:541px;width:16px"></em><b style="left:494px;top:540px"></b>
<i style="left:513px;top:534px">Polish 0</i><em style="left:513px;top:541px;width:54px"></em><b style="left:513px;top:540px"></b>
<i style="left:494px;top:544px">Bevel 0</i><em style="left:494px;top:551px;width:34px"></em><b style="left:494px;top:550px"></b>
<i style="left:532px;top:544px">Elevation 100</i><em style="left:532px;top:551px;width:36px"></em><b style="left:563px;top:550px;width:6px"></b>
<i style="left:494px;top:554px">Thickness 0.1</i><em style="left:494px;top:561px;width:74px"></em><b style="left:525px;top:560px"></b>
<svg class="a" style="left:543px;top:534px" width="6" height="6"><circle cx="3" cy="3" r="1.600" fill="none" stroke="#ccc"/></svg>
<u style="left:570px;top:534px;width:36px;height:27px;line-height:27px">GroupsLoops</u>
<i style="left:610px;top:534px">Loops 4</i><em style="left:610px;top:541px;width:33px"></em><b style="left:621px;top:540px"></b>
<i style="left:610px;top:544px">GPolish 50</i><em style="left:610px;top:551px;width:43px"></em><b style="left:624px;top:550px"></b>
<svg class="a" style="left:640px;top:543px" width="6" height="6"><circle cx="3" cy="3" r="1.600" fill="none" stroke="#ccc"/></svg>
<u style="left:659px;top:535px;width:36px;background:#2e2e2e">LazyMouse</u>
<i class="d" style="left:660px;top:544px">LazyRadius</i><em style="left:660px;top:551px;width:35px;background:#3b3b3b"></em><b style="left:670px;top:550px;background:#7a4d1e"></b>
<i class="d" style="left:660px;top:554px">LazyStep</i><em style="left:660px;top:560px;width:35px;background:#3b3b3b"></em><b style="left:664px;top:559px;background:#7a4d1e"></b>
<i style="left:660px;top:563px">Roll Dist 1</i><em style="left:660px;top:570px;width:35px"></em><b style="left:662px;top:569px"></b>
<i style="left:712px;top:534px">SDiv 5</i><em style="left:712px;top:541px;width:35px"></em><b style="left:741px;top:540px;width:6px"></b>
<u style="left:750px;top:535px;width:36px">Del Lower</u><u class="n" style="left:789px;top:535px;width:26px;background:transparent">Del Higher</u>
<u style="left:827px;top:535px;width:36px;background:#2e2e2e">Dynamic</u>
<i class="d" style="left:827px;top:544px">SmoothSubdiv</i><em style="left:827px;top:551px;width:36px;background:#3b3b3b"></em><b style="left:835px;top:550px;background:#7a4d1e"></b>
<u style="left:712px;top:555px;width:23px;background:#2d2d2d">Mrgb</u>
<u style="left:737px;top:554px;width:37px">FillObject</u>
<u style="left:497px;top:573px;width:18px;height:3px;background:#555"></u><u style="left:517px;top:573px;width:13px;height:3px;background:#555"></u>

</div></body></html>
